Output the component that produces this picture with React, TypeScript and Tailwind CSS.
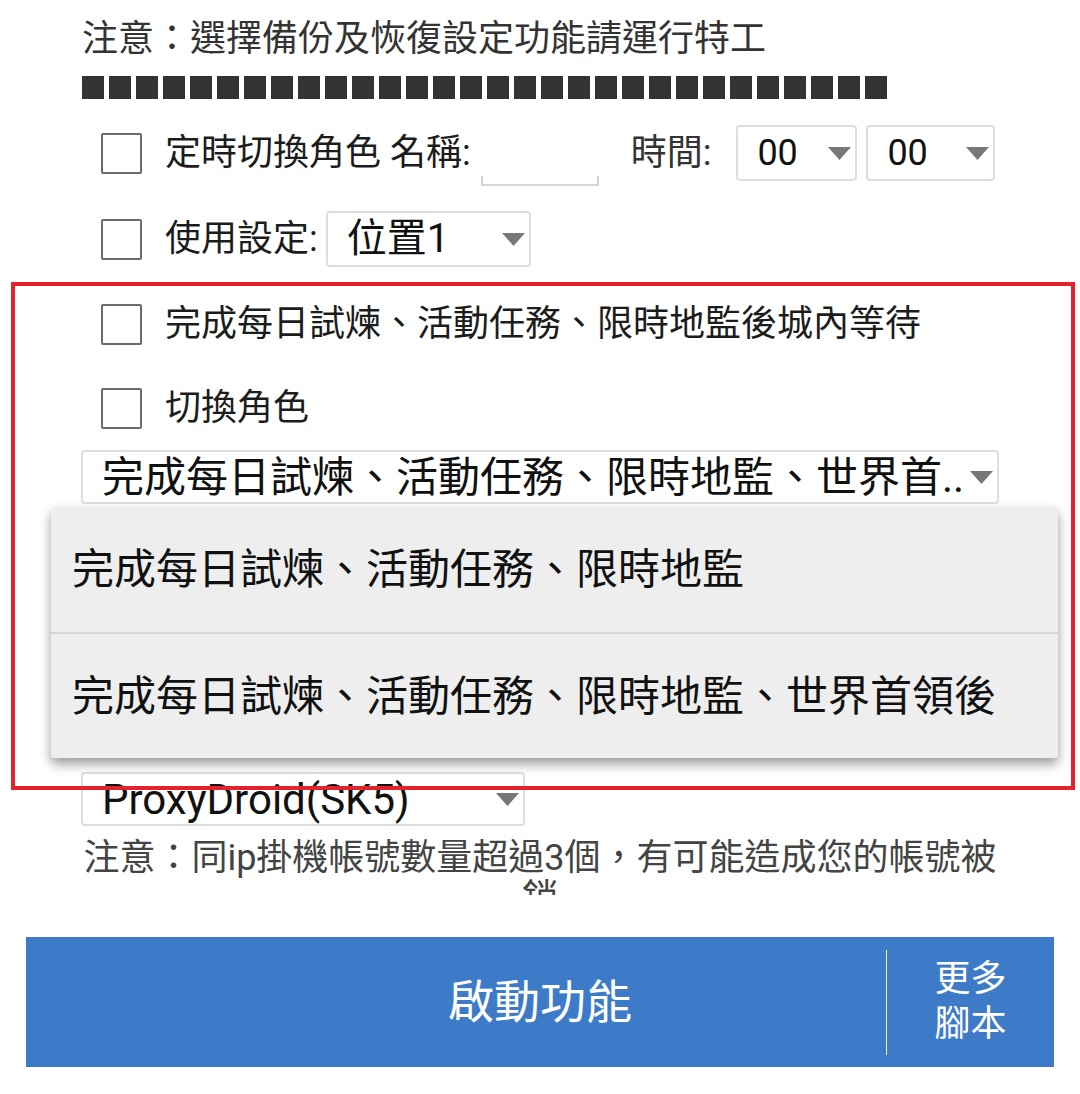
import React from "react";

const font = "font-['Roboto','Noto_Sans_CJK_TC',sans-serif]";

const Arrow = () => (
  <svg width="23" height="13" viewBox="0 0 23 13" className="shrink-0">
    <path d="M0 0 H23 L11.5 13 Z" fill="#777" />
  </svg>
);

const Checkbox = () => (
  <div className="w-[41px] h-[41px] shrink-0 border-2 border-[#6b6b6b] rounded-[2px] bg-white" />
);

type SelectProps = { label: string; className: string; textSize: string };

const Select = ({ label, className, textSize }: SelectProps) => (
  <div
    className={`flex items-center shrink-0 border-2 border-[#dedede] rounded-[4px] bg-white pl-[19px] pr-[4px] ${className}`}
  >
    <span className={`flex-1 min-w-0 overflow-hidden whitespace-nowrap text-[#111] ${textSize}`}>{label}</span>
    <Arrow />
  </div>
);

const App = () => {
  return (
    <div className={`relative w-[1080px] h-[1094px] overflow-hidden bg-white ${font}`}>
      <div className="pt-[16px]">
        <p className="pl-[82px] text-[36px] leading-[47px] text-[#333]">注意：選擇備份及恢復設定功能請運行特工</p>
        <div className="mt-[13px] pl-[82px] flex gap-[5px]">
          {Array.from({ length: 30 }).map((_, i) => (
            <span key={i} className="block w-[22px] h-[23px] bg-[#333]" />
          ))}
        </div>

        {/* 定時切換角色 */}
        <div className="mt-[26px] h-[56px] pl-[101px] flex items-center">
          <Checkbox />
          <span className="ml-[23px] text-[36px] text-[#1c1c1c] whitespace-nowrap">定時切換角色 名稱:</span>
          <div className="ml-[10px] w-[118px] h-[61px] self-start flex items-end">
            <div className="w-full h-[10px] border-x-2 border-b-2 border-[#d4d4d4] rounded-b-[2px]" />
          </div>
          <span className="ml-[32px] text-[36px] text-[#333] whitespace-nowrap">時間:</span>
          <Select label="00" className="ml-[25px] w-[121px] h-[56px]" textSize="text-[36px]" />
          <Select label="00" className="ml-[9px] w-[129px] h-[56px]" textSize="text-[36px]" />
        </div>

        {/* 使用設定 */}
        <div className="mt-[30px] h-[56px] pl-[101px] flex items-center">
          <Checkbox />
          <span className="ml-[23px] text-[36px] text-[#1c1c1c] whitespace-nowrap">使用設定:</span>
          <Select label="位置1" className="ml-[8px] w-[205px] h-[56px]" textSize="text-[40px]" />
        </div>

        <div className="mt-[29px] h-[56px] pl-[101px] flex items-center">
          <Checkbox />
          <span className="ml-[23px] text-[36px] text-[#1c1c1c] whitespace-nowrap">完成每日試煉、活動任務、限時地監後城內等待</span>
        </div>

        <div className="mt-[28px] h-[56px] pl-[101px] flex items-center">
          <Checkbox />
          <span className="ml-[23px] text-[36px] text-[#1c1c1c] whitespace-nowrap">切換角色</span>
        </div>

        <div className="mt-[14px] pl-[81px]">
          <Select
            label="完成每日試煉、活動任務、限時地監、世界首.."
            className="w-[918px] h-[54px]"
            textSize="text-[42px]"
          />
        </div>

        {/* covered by the open menu */}
        <div className="h-[268px]" />

        <div className="pl-[81px]">
          <Select label="ProxyDroid(SK5)" className="w-[444px] h-[54px]" textSize="text-[42px]" />
        </div>

        <div className="mt-[12px] ml-[78px] w-[924px] h-[57px] overflow-hidden text-center text-[36px] leading-[40px] text-[#444]">
          注意：同ip掛機帳號數量超過3個，有可能造成您的帳號被銷
        </div>

        <div className="mt-[42px] mx-[26px] h-[130px] bg-[#3d7bc8] flex items-stretch text-white">
          <div className="w-[168px] shrink-0" />
          <div className="flex-1 flex items-center justify-center text-[46px]">啟動功能</div>
          <div className="w-[168px] shrink-0 flex items-center">
            <div className="w-px h-[105px] bg-white/90" />
            <div className="flex-1 flex flex-col items-center text-[36px] leading-[45px]">
              <span>更多</span>
              <span>腳本</span>
            </div>
          </div>
        </div>
      </div>

      {/* open dropdown menu */}
      <div className="absolute left-[51px] top-[507px] w-[1007px] h-[251px] bg-[#eeeeee] rounded-[3px] shadow-[0_6px_12px_rgba(0,0,0,0.4)] flex flex-col">
        <div className="h-[125px] flex items-center pl-[21px] text-[42px] text-[#111] whitespace-nowrap">
          完成每日試煉、活動任務、限時地監
        </div>
        <div className="h-[2px] bg-[#d6d6d6]" />
        <div className="flex-1 flex items-center pl-[21px] text-[42px] text-[#111] whitespace-nowrap">
          完成每日試煉、活動任務、限時地監、世界首領後
        </div>
      </div>

      {/* annotation frame */}
      <div className="absolute left-[11px] top-[282px] w-[1064px] h-[508px] border-4 border-[#e2222c] pointer-events-none" />
    </div>
  );
};

export default App;
